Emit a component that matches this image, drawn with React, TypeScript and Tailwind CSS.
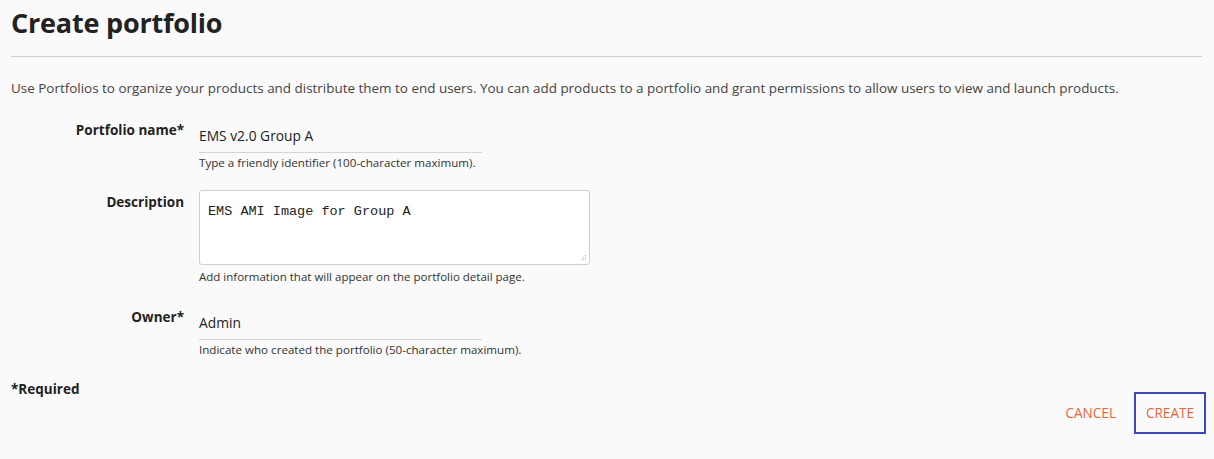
export default function App() {
  return (
    <div
      className="w-[1214px] h-[459px] bg-[#fafafa] text-[#333] overflow-hidden"
      style={{ fontFamily: '"Open Sans", "Noto Sans", sans-serif' }}
    >
      <div className="pl-[11px] pr-[12px]">
        {/* Header */}
        <h1 className="pt-[4px] text-[27px] leading-[38px] font-bold text-[#222] tracking-[-0.2px]">
          Create portfolio
        </h1>
        <div className="mt-[14px] border-t border-[#cfcfcf]" />

        <p className="mt-[22px] text-[13.45px] leading-[18px] text-[#444]">
          Use Portfolios to organize your products and distribute them to end users. You can add
          products to a portfolio and grant permissions to allow users to view and launch products.
        </p>

        {/* Form */}
        <div className="mt-[24px] flex flex-col">
          <div className="flex gap-[15px]">
            <label className="w-[173px] text-right text-[13.5px] leading-[18px] font-bold text-[#222]">
              Portfolio name*
            </label>
            <div>
              <div className="w-[283px] h-[32px] border-b border-[#d5d5d5] flex items-center text-[13.8px] text-[#222]">
                EMS v2.0 Group A
              </div>
              <p className="mt-[2px] text-[11.6px] leading-[15px] text-[#333]">
                Type a friendly identifier (100-character maximum).
              </p>
            </div>
          </div>

          <div className="mt-[20px] flex gap-[15px]">
            <label className="w-[173px] mt-[3px] text-right text-[13.5px] leading-[18px] font-bold text-[#222]">
              Description
            </label>
            <div>
              <div className="relative w-[391px] h-[75px] border border-[#cfcfcf] rounded-[3px] bg-white pl-[8px] pt-[6px]">
                <span
                  className="text-[13.5px] leading-[18px] text-[#222]"
                  style={{ fontFamily: '"Liberation Mono", monospace' }}
                >
                  EMS AMI Image for Group A
                </span>
                <svg className="absolute right-[2px] bottom-[2px]" width="8" height="8" viewBox="0 0 8 8">
                  <rect x="6" y="1" width="1" height="1" fill="#aaa" />
                  <rect x="4" y="3" width="1" height="1" fill="#aaa" />
                  <rect x="6" y="3" width="1" height="1" fill="#aaa" />
                  <rect x="2" y="5" width="1" height="1" fill="#aaa" />
                  <rect x="4" y="5" width="1" height="1" fill="#aaa" />
                  <rect x="6" y="5" width="1" height="1" fill="#aaa" />
                </svg>
              </div>
              <p className="mt-[4px] text-[11.5px] leading-[15px] text-[#333]">
                Add information that will appear on the portfolio detail page.
              </p>
            </div>
          </div>

          <div className="mt-[24px] flex gap-[15px]">
            <label className="w-[173px] text-right text-[13.5px] leading-[18px] font-bold text-[#222]">
              Owner*
            </label>
            <div>
              <div className="w-[283px] h-[32px] border-b border-[#d5d5d5] flex items-center text-[13.8px] text-[#222]">
                Admin
              </div>
              <p className="mt-[2px] text-[11.6px] leading-[15px] text-[#333]">
                Indicate who created the portfolio (50-character maximum).
              </p>
            </div>
          </div>
        </div>

        <p className="mt-[23px] text-[13.5px] leading-[18px] font-bold text-[#222]">*Required</p>

        {/* Actions */}
        <div className="mt-[-6px] mr-[-4px] flex justify-end items-center gap-[18px]">
          <button className="text-[13.6px] text-[#e8663c] uppercase">Cancel</button>
          <button className="w-[72px] h-[42px] border-2 border-[#3f47bf] text-[13.6px] text-[#e8663c] uppercase">
            Create
          </button>
        </div>
      </div>
    </div>
  );
}
